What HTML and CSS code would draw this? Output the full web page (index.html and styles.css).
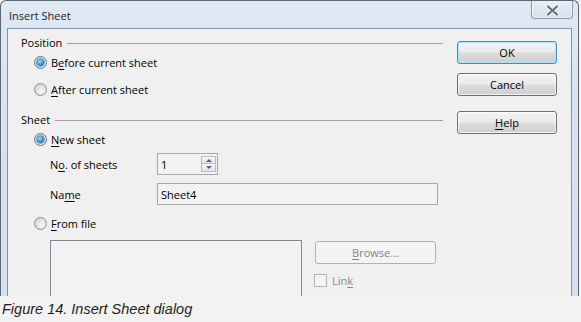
FILE: index.html
```html
<!DOCTYPE html>
<html>
<head>
<meta charset="utf-8">
<link rel="stylesheet" href="styles.css">
</head>
<body>
<div class="window">
  <div class="titlebar">
    <span class="title">Insert Sheet</span>
    <span class="close">
      <svg width="13" height="11" viewBox="0 0 13 11">
        <path d="M2 1.5 L11 9.5 M11 1.5 L2 9.5" stroke="#f4f7fa" stroke-width="4.2" stroke-linecap="round" fill="none"/>
        <path d="M2 1.5 L11 9.5 M11 1.5 L2 9.5" stroke="#65707c" stroke-width="2.2" stroke-linecap="round" fill="none"/>
      </svg>
    </span>
  </div>
  <div class="client">
    <div class="left">
      <div class="hdr hdr-pos"><span>Position</span><i class="rule"></i></div>
      <div class="row radio-row"><span class="radio on"></span><span>B<u>e</u>fore current sheet</span></div>
      <div class="row radio-row r-after"><span class="radio"></span><span><u>A</u>fter current sheet</span></div>
      <div class="hdr hdr-sheet"><span>Sheet</span><i class="rule"></i></div>
      <div class="row radio-row"><span class="radio on"></span><span><u>N</u>ew sheet</span></div>
      <div class="row sub r-count">
        <span class="lbl">N<u>o</u>. of sheets</span>
        <span class="field spin">
          <span>1</span>
          <span class="spin-btns">
            <span class="sbtn"><i class="up"></i></span>
            <span class="sbtn"><i class="down"></i></span>
          </span>
        </span>
      </div>
      <div class="row sub r-name">
        <span class="lbl">Na<u>m</u>e</span>
        <span class="field name">Sheet4</span>
      </div>
      <div class="row radio-row r-from"><span class="radio"></span><span><u>F</u>rom file</span></div>
      <div class="file-area">
        <div class="listbox"></div>
        <div class="file-side">
          <div class="btn disabled browse"><span><u>B</u>rowse...</span></div>
          <div class="link-row"><span class="check"></span><span>Lin<u>k</u></span></div>
        </div>
      </div>
    </div>
    <div class="right">
      <div class="btn default">OK</div>
      <div class="btn cancel">Cancel</div>
      <div class="btn help"><span><u>H</u>elp</span></div>
    </div>
  </div>
</div>
<div class="caption">Figure 14. Insert Sheet dialog</div>
</body>
</html>
```

FILE: styles.css
```css
html, body {
  margin: 0;
  padding: 0;
}
body {
  width: 581px;
  height: 322px;
  overflow: hidden;
  background: #f2f2f2;
  font-family: "Open Sans", "Noto Sans", sans-serif;
  font-size: 11px;
  color: #000;
}
u { text-decoration: underline; text-underline-offset: 2px; }

.window {
  box-sizing: border-box;
  width: 579px;
  height: 296px;
  border: 1px solid #5d6875;
  border-bottom: none;
  border-radius: 6px 6px 0 0;
  background: linear-gradient(180deg, #dfe9f4 0%, #d6e3f1 40%, #d3e1f0 100%);
  padding: 0 6px;
  display: flex;
  flex-direction: column;
  overflow: hidden;
}
.titlebar {
  height: 27px;
  flex: none;
  display: flex;
  align-items: flex-start;
}
.title {
  margin-left: 2px;
  line-height: 27px;
  padding-top: 1px;
  color: #1b1b1b;
}
.close {
  margin-left: auto;
  margin-right: -1px;
  margin-top: -2px;
  width: 42px;
  height: 20px;
  box-sizing: border-box;
  border: 1px solid #8a96a3;
  border-top: none;
  border-radius: 0 0 4px 4px;
  background: linear-gradient(180deg, #e9eff6 0%, #dde6f0 60%, #d4dee9 100%);
  box-shadow: inset 0 0 0 1px rgba(255,255,255,0.6);
  display: flex;
  align-items: center;
  justify-content: center;
  padding-top: 3px;
}
.close svg { display: block; }

.client {
  flex: 1;
  display: flex;
  border: 1px solid #8395aa;
  border-bottom: none;
  background: #f0f0f0;
  padding: 5px 0 0 13px;
}
.left {
  width: 422px;
  flex: none;
  display: flex;
  flex-direction: column;
}
.hdr {
  height: 17px;
  display: flex;
  align-items: center;
}
.hdr .rule {
  flex: 1;
  height: 1px;
  background: #a0a0a0;
  margin-left: 5px;
  margin-top: 1px;
}
.hdr-sheet { margin-top: 11px; }

.row {
  height: 22px;
  display: flex;
  align-items: center;
  flex: none;
}
.radio-row { padding-left: 13px; }
.r-after { margin-top: 5px; }
.r-from { margin-top: 7px; }
.radio {
  width: 13px;
  height: 13px;
  box-sizing: border-box;
  border-radius: 50%;
  border: 1px solid #8a8d91;
  background: radial-gradient(circle at 60% 65%, #f6f6f6 0%, #e3e3e3 50%, #cfcfcf 100%);
  margin-right: 4px;
  display: flex;
  align-items: center;
  justify-content: center;
}
.radio.on {
  border-color: #5f7690;
}
.radio.on::after {
  content: "";
  width: 7px;
  height: 7px;
  border-radius: 50%;
  background: radial-gradient(circle at 40% 35%, #a6e0fb 0%, #3aa0db 45%, #155a97 100%);
  box-shadow: 0 0 0 0.5px #1c4c78;
}

.sub { padding-left: 29px; }
.r-count { margin-top: 3px; }
.r-name { margin-top: 8px; }
.lbl { width: 107px; flex: none; }
.field {
  box-sizing: border-box;
  height: 22px;
  border: 1px solid #a9a9a9;
  background: #f2f2f2;
  display: flex;
  align-items: center;
  padding-left: 3px;
}
.spin {
  width: 61px;
  justify-content: space-between;
  padding-right: 1px;
}
.spin-btns {
  display: flex;
  flex-direction: column;
}
.sbtn {
  width: 15px;
  height: 8px;
  box-sizing: border-box;
  border: 1px solid #b9bcc1;
  background: linear-gradient(180deg, #f7f7f7, #e4e4e4);
  display: flex;
  align-items: center;
  justify-content: center;
}
.sbtn + .sbtn { border-top: none; height: 8px; }
.sbtn i {
  width: 0;
  height: 0;
  border-left: 3px solid transparent;
  border-right: 3px solid transparent;
}
.sbtn i.up { border-bottom: 3px solid #4a5f8c; }
.sbtn i.down { border-top: 3px solid #4a5f8c; }
.name { width: 281px; }

.file-area {
  margin-top: 6px;
  margin-left: 29px;
  display: flex;
  align-items: flex-start;
}
.listbox {
  width: 252px;
  height: 80px;
  box-sizing: border-box;
  border: 1px solid #7f8794;
  background: #f2f2f2;
  flex: none;
}
.file-side {
  margin-left: 12px;
  display: flex;
  flex-direction: column;
}
.browse {
  margin-left: 1px;
  margin-top: 1px;
  width: 121px;
}
.link-row {
  margin-top: 10px;
  display: flex;
  align-items: center;
  color: #8a8a8a;
  height: 13px;
}
.check {
  width: 13px;
  height: 13px;
  box-sizing: border-box;
  border: 1px solid #b5b5b5;
  background: #f4f4f4;
  margin-right: 5px;
}

.right {
  margin-left: 14px;
  margin-top: 7px;
  width: 100px;
  display: flex;
  flex-direction: column;
}
.btn {
  box-sizing: border-box;
  height: 23px;
  border: 1px solid #707070;
  border-radius: 3px;
  background: linear-gradient(180deg, #f3f3f3 0%, #ebebeb 48%, #dddddd 52%, #cfcfcf 100%);
  box-shadow: inset 0 0 0 1px rgba(255,255,255,0.7);
  display: flex;
  align-items: center;
  justify-content: center;
}
.btn.default {
  border-color: #3d8fc9;
  box-shadow: inset 0 0 0 1px #a9e2fa;
}
.cancel { margin-top: 9px; }
.help { margin-top: 15px; }
.btn.disabled {
  border-color: #adb2b5;
  background: #f4f4f4;
  box-shadow: none;
  color: #838383;
}

.caption {
  height: 26px;
  line-height: 26px;
  padding-left: 2px;
  font-family: "Liberation Sans", Arial, sans-serif;
  font-style: italic;
  font-size: 14.5px;
  color: #1f1f1f;
}
```
